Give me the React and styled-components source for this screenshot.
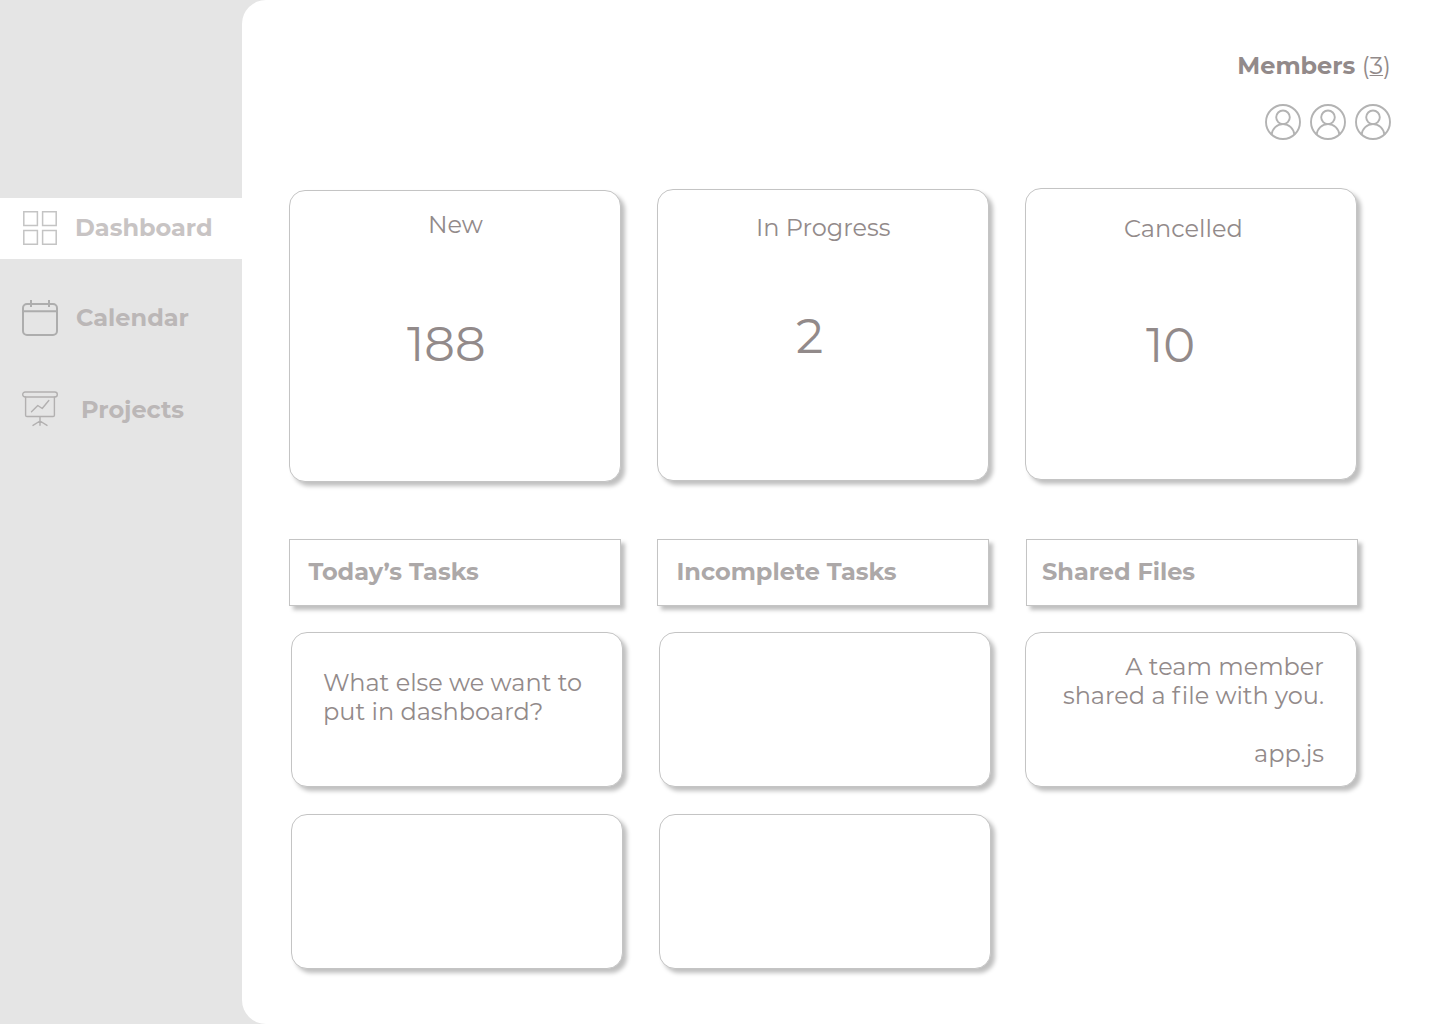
import React from "react";
import styled, { createGlobalStyle } from "styled-components";

const GlobalStyle = createGlobalStyle`
  *, *::before, *::after { box-sizing: border-box; }
  body { margin: 0; background: #e5e5e5; }
  h2, h3, p { margin: 0; }
`;

const Page = styled.div`
  display: flex;
  width: 1440px;
  height: 1024px;
  overflow: hidden;
  background: #e5e5e5;
  color: #928a8a;
  font-family: Montserrat, Inter, "Liberation Sans", sans-serif;
  font-size: 24px;
  line-height: 29px;
  font-weight: 400;
  font-variant-ligatures: none;
`;

const Sidebar = styled.nav`
  flex: none;
  width: 242px;
  padding-top: 198px;
  display: flex;
  flex-direction: column;
  gap: 30px;
`;

const NavItem = styled.a`
  display: flex;
  align-items: center;
  height: 61px;
  padding: 0 0 ${(p) => p.$lift || 0}px 22px;
  gap: ${(p) => p.$gap}px;
  background: ${(p) => (p.$active ? "#fff" : "transparent")};
  color: ${(p) => (p.$active ? "#c8c4c4" : "#bbb7b7")};
  font-weight: 700;

  svg { flex: none; display: block; }
`;

const NavText = styled.span`
  padding-bottom: ${(p) => p.$raise || 0}px;
`;

const Main = styled.main`
  flex: 1;
  background: #fff;
  border-radius: 24px 0 0 24px;
  padding: 51px 49px 0 47px;
`;

const Members = styled.header`
  display: flex;
  flex-direction: column;
  align-items: flex-end;
  gap: 24px;
  height: 137px;
  padding-right: 2px;
`;

const MembersTitle = styled.p`
  white-space: pre;
  b { font-weight: 700; }
  u { text-decoration-thickness: 1px; }
`;

const Avatars = styled.div`
  display: flex;
  gap: 9px;
  svg { display: block; }
`;

const Columns = styled.div`
  display: flex;
  gap: 36px;
`;

const Panel = styled.section`
  width: 332px;
  background: #fff;
  border: 1px solid #c4c4c4;
  box-shadow: 4px 4px 4px rgba(0, 0, 0, 0.25);
`;

const StatCard = styled(Panel)`
  height: 292px;
  border-radius: 16px;
  margin-top: ${(p) => p.$top}px;
  padding-top: ${(p) => p.$pad}px;
`;

const StatLabel = styled.h3`
  font-size: 24px;
  font-weight: 400;
  padding-left: ${(p) => p.$left}px;
`;

const StatValue = styled.p`
  margin-top: ${(p) => p.$top}px;
  padding-left: ${(p) => p.$left}px;
  font-size: 48px;
  line-height: 59px;
`;

const TaskColumns = styled(Columns)`
  margin-top: 57px;
  gap: 0;
`;

const TaskColumn = styled.div`
  width: 368px;
  display: flex;
  flex-direction: column;
`;

const ColumnHead = styled(Panel)`
  height: 67px;
  margin-bottom: 26px;
  margin-left: ${(p) => p.$shift || 0}px;
  padding: 17px 0 0 ${(p) => p.$left}px;
`;

const HeadText = styled.h2`
  font-size: 24px;
  font-weight: 700;
  color: #aca8a8;
`;

const TaskCard = styled(Panel)`
  height: 155px;
  border-radius: 16px;
  margin: 0 0 27px ${(p) => p.$shift || 0}px;
  padding: ${(p) => p.$pad || "0"};
  text-align: ${(p) => p.$align || "left"};
`;

const Line = styled.p`
  min-height: 29px;
  white-space: nowrap;
`;

const Loose = styled.span`
  letter-spacing: 1.8px;
`;

const GridIcon = () => (
  <svg width="36" height="36" viewBox="0 0 36 36" fill="none" stroke="#c4c4c4" strokeWidth="1.5">
    <path d="M1.8 1.8h13.6v13.6H1.8zM20.6 1.8h13.6v13.6H20.6zM1.8 20.6h13.6v13.6H1.8zM20.6 20.6h13.6v13.6H20.6z" />
  </svg>
);

const CalendarIcon = () => (
  <svg width="36" height="36" viewBox="0 0 36 36" fill="none" stroke="#adadad" strokeWidth="2">
    <rect x="1" y="4" width="34" height="31" rx="4" />
    <path d="M1 11.2h34M9 0v7M27 0v7" />
  </svg>
);

const BoardIcon = () => (
  <svg width="36" height="36" viewBox="0 0 36 36" fill="none" stroke="#b2b0b0" strokeWidth="1.4" strokeLinecap="round" strokeLinejoin="round">
    <rect x=".7" y="1" width="34.6" height="5" rx="2.5" />
    <path d="M3.6 6v18.2c0 .8.6 1.3 1.3 1.3h26.2c.8 0 1.3-.6 1.3-1.3V6M18 25.7v8.6M18 30l-7 4.4M18 30l7 4.4M9.5 20.8l6.3-6.3 4.4 3 6.6-8" />
  </svg>
);

const PersonIcon = () => (
  <svg width="36" height="36" viewBox="0 0 36 36" fill="none" stroke="#b3b3b3" strokeWidth="1.9">
    <circle cx="18" cy="18" r="17" />
    <circle cx="18" cy="13.3" r="6.8" />
    <path d="M6.6 30.7C7.2 24.6 12 20.1 18 20.1s10.8 4.5 11.4 10.6" />
  </svg>
);

const nav = [
  { label: "Dashboard", icon: GridIcon, gap: 17, lift: 2, active: true },
  { label: "Calendar", icon: CalendarIcon, gap: 18, lift: 3, raise: 2 },
  { label: "Projects", icon: BoardIcon, gap: 23, lift: 3 },
];

const stats = [
  { label: "New", value: "188", top: 2, pad: 19, left: 138, valueTop: 76, valueLeft: 117 },
  { label: "In Progress", value: "2", top: 1, pad: 23, left: 98, valueTop: 65, valueLeft: 138 },
  { label: "Cancelled", value: "10", top: 0, pad: 25, left: 98, valueTop: 73, valueLeft: 120 },
];

export default function App() {
  return (
    <Page>
      <GlobalStyle />
      <Sidebar>
        {nav.map(({ label, icon: Icon, gap, active, lift, raise }) => (
          <NavItem key={label} $gap={gap} $active={active} $lift={lift}>
            <Icon />
            <NavText $raise={raise}>{label}</NavText>
          </NavItem>
        ))}
      </Sidebar>
      <Main>
        <Members>
          <MembersTitle><b>Members</b> (<u>3</u>)</MembersTitle>
          <Avatars>
            <PersonIcon />
            <PersonIcon />
            <PersonIcon />
          </Avatars>
        </Members>
        <Columns>
          {stats.map((s) => (
            <StatCard key={s.label} $top={s.top} $pad={s.pad}>
              <StatLabel $left={s.left}>{s.label}</StatLabel>
              <StatValue $top={s.valueTop} $left={s.valueLeft}>{s.value}</StatValue>
            </StatCard>
          ))}
        </Columns>
        <TaskColumns>
          <TaskColumn>
            <ColumnHead $left={18.4}><HeadText>Today’s Tasks</HeadText></ColumnHead>
            <TaskCard $shift={2} $pad="35px 0 0 31px">
              <Line>What else we want to</Line>
              <Line>put in dashboard?</Line>
            </TaskCard>
            <TaskCard $shift={2} />
          </TaskColumn>
          <TaskColumn>
            <ColumnHead $left={18.4}><HeadText>Incomplete Tasks</HeadText></ColumnHead>
            <TaskCard $shift={2} />
            <TaskCard $shift={2} />
          </TaskColumn>
          <TaskColumn>
            <ColumnHead $shift={1} $left={15}><HeadText>Shared Files</HeadText></ColumnHead>
            <TaskCard $align="right" $pad="19px 32px 0 0">
              <Line>A team member</Line>
              <Line>shared a <Loose>f</Loose>ile with you.</Line>
              <Line />
              <Line>app.js</Line>
            </TaskCard>
          </TaskColumn>
        </TaskColumns>
      </Main>
    </Page>
  );
}
